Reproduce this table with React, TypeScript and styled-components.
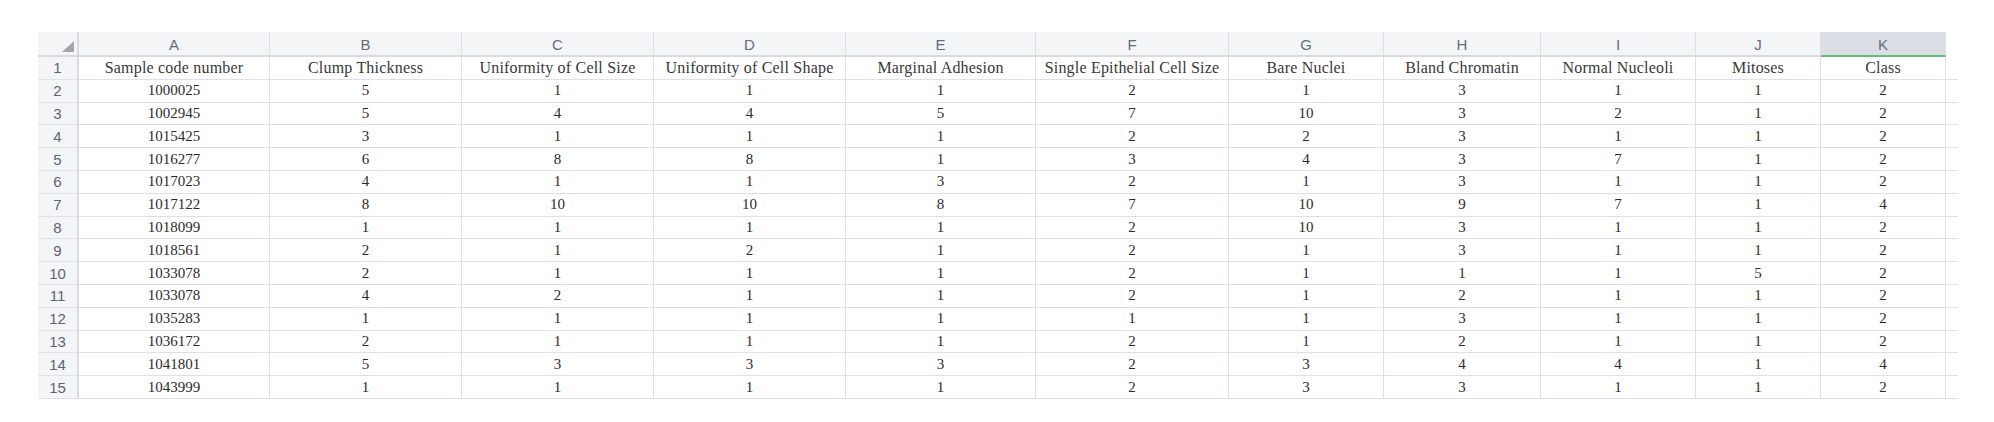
import React from "react";
import styled, { createGlobalStyle, css } from "styled-components";

const GlobalStyle = createGlobalStyle`
  html, body { margin: 0; padding: 0; background: #ffffff; }
  body { font-family: "Liberation Serif", serif; }
`;

const COLS = [
  { key: "A", w: 191, label: "Sample code number" },
  { key: "B", w: 192, label: "Clump Thickness" },
  { key: "C", w: 192, label: "Uniformity of Cell Size" },
  { key: "D", w: 192, label: "Uniformity of Cell Shape" },
  { key: "E", w: 190, label: "Marginal Adhesion" },
  { key: "F", w: 193, label: "Single Epithelial Cell Size" },
  { key: "G", w: 155, label: "Bare Nuclei" },
  { key: "H", w: 157, label: "Bland Chromatin" },
  { key: "I", w: 155, label: "Normal Nucleoli" },
  { key: "J", w: 125, label: "Mitoses" },
  { key: "K", w: 125, label: "Class" },
];

const DATA: (string | number)[][] = [
  [1000025, 5, 1, 1, 1, 2, 1, 3, 1, 1, 2],
  [1002945, 5, 4, 4, 5, 7, 10, 3, 2, 1, 2],
  [1015425, 3, 1, 1, 1, 2, 2, 3, 1, 1, 2],
  [1016277, 6, 8, 8, 1, 3, 4, 3, 7, 1, 2],
  [1017023, 4, 1, 1, 3, 2, 1, 3, 1, 1, 2],
  [1017122, 8, 10, 10, 8, 7, 10, 9, 7, 1, 4],
  [1018099, 1, 1, 1, 1, 2, 10, 3, 1, 1, 2],
  [1018561, 2, 1, 2, 1, 2, 1, 3, 1, 1, 2],
  [1033078, 2, 1, 1, 1, 2, 1, 1, 1, 5, 2],
  [1033078, 4, 2, 1, 1, 2, 1, 2, 1, 1, 2],
  [1035283, 1, 1, 1, 1, 1, 1, 3, 1, 1, 2],
  [1036172, 2, 1, 1, 1, 2, 1, 2, 1, 1, 2],
  [1041801, 5, 3, 3, 3, 2, 3, 4, 4, 1, 4],
  [1043999, 1, 1, 1, 1, 2, 3, 3, 1, 1, 2],
];

const Page = styled.div`
  padding: 32px 0 0 38px;
`;

const Sheet = styled.div`
  display: grid;
  grid-template-columns: 41px ${COLS.map((c) => `${c.w}px`).join(" ")} 12px;
  grid-template-rows: 25px;
  grid-auto-rows: 22.8px;
  width: max-content;
`;

const cellBase = css`
  box-sizing: border-box;
  display: flex;
  align-items: center;
  justify-content: center;
  overflow: hidden;
  white-space: nowrap;
`;

const Corner = styled.div`
  ${cellBase};
  position: relative;
  background: #f4f5f7;
  border-right: 2px solid #d8dadf;
  border-bottom: 2px solid #d8dadf;
`;

const CornerMark = styled.svg`
  position: absolute;
  right: 3px;
  bottom: 3px;
`;

const ColHead = styled.div<{ $selected?: boolean }>`
  ${cellBase};
  background: ${(p) => (p.$selected ? "#dcdee6" : "#f4f5f7")};
  border-right: 1px solid #dcdfe4;
  border-bottom: 2px solid ${(p) => (p.$selected ? "#5fc17b" : "#d8dadf")};
  font-family: "Liberation Sans", Arial, sans-serif;
  font-size: 15px;
  color: #666d7a;
  padding-top: 1px;
`;

const HeadFill = styled.div`
  box-sizing: border-box;
  background: #ffffff;
`;

const RowNum = styled.div`
  ${cellBase};
  background: #f4f5f7;
  border-right: 2px solid #d8dadf;
  border-bottom: 1px solid #dfe2e8;
  font-family: "Liberation Sans", Arial, sans-serif;
  font-size: 15px;
  color: #5d6473;
`;

const Cell = styled.div<{ $title?: boolean }>`
  ${cellBase};
  border-right: 1px solid #dbe0ec;
  border-bottom: 1px solid #dbe0ec;
  font-family: "Liberation Serif", "Times New Roman", serif;
  font-size: ${(p) => (p.$title ? "16px" : "15px")};
  letter-spacing: ${(p) => (p.$title ? "0.2px" : "0")};
  color: ${(p) => (p.$title ? "#383838" : "#2b2b2b")};
`;

const Tail = styled.div`
  box-sizing: border-box;
  border-bottom: 1px solid #dbe0ec;
`;

export default function App() {
  return (
    <>
      <GlobalStyle />
      <Page>
        <Sheet>
          <Corner>
            <CornerMark width="12" height="11" viewBox="0 0 12 11">
              <polygon points="12,0 12,11 0,11" fill="#a3a5a9" />
            </CornerMark>
          </Corner>
          {COLS.map((c) => (
            <ColHead key={c.key} $selected={c.key === "K"}>
              {c.key}
            </ColHead>
          ))}
          <HeadFill />

          <RowNum>1</RowNum>
          {COLS.map((c) => (
            <Cell key={c.key} $title>
              {c.label}
            </Cell>
          ))}
          <Tail />

          {DATA.map((row, i) => (
            <React.Fragment key={i}>
              <RowNum>{i + 2}</RowNum>
              {row.map((v, j) => (
                <Cell key={j}>{v}</Cell>
              ))}
              <Tail />
            </React.Fragment>
          ))}
        </Sheet>
      </Page>
    </>
  );
}
